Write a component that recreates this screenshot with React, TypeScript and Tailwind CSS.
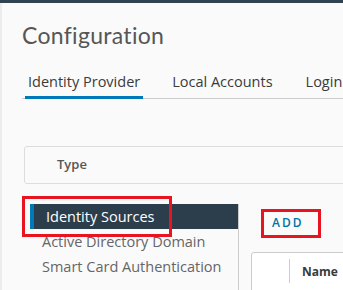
export default function App() {
  const font = { fontFamily: "'Open Sans', Lato, sans-serif" };
  return (
    <div className="h-[290px] w-[343px] overflow-hidden bg-[#fafafa]" style={font}>
      <div className="h-[3px] bg-[#314351]" />
      <div className="flex h-[287px]">
        <div className="w-[2px] shrink-0 bg-[#ececec]" />
        <div className="relative min-w-0 flex-1 pl-[20px]">
          <h1
            className="mt-[18px] text-[23px] leading-[28px] tracking-[0.3px] text-[#565656]"
            style={{ fontFamily: "Lato, sans-serif" }}
          >
            Configuration
          </h1>

          <div className="mt-[24px] flex h-[26px] w-[400px] items-start border-b border-[#cccccc] pl-[3px] text-[14.5px] leading-[18px] text-[#3a3a3a]">
            <div className="-mb-px h-[26px] border-b-[3px] border-[#0079b8] px-[3px]">
              Identity Provider
            </div>
            <div className="ml-[29px]">Local Accounts</div>
            <div className="ml-[33px]">Login</div>
          </div>

          <div className="ml-[2px] mt-[47px] flex h-[38px] w-[400px] items-center rounded-[3px] border border-[#dddddd] pl-[32px] text-[13px] font-semibold text-[#565656]">
            Type
          </div>

          <div className="mt-[20px] flex">
            <div className="ml-[8px] w-[209px] shrink-0 border-r border-[#cccccc] pb-[20px] text-[14.5px] text-[#666666]">
              <div className="flex h-[25px] items-center border-l-[4px] border-[#0079b8] bg-[#2c3e4c] pl-[12px] text-white">
                Identity Sources
              </div>
              <div className="flex h-[25px] items-center pl-[12px]">Active Directory Domain</div>
              <div className="flex h-[25px] items-center pl-[12px]">Smart Card Authentication</div>
            </div>
            <div className="min-w-0 flex-1 pl-[12px]">
              <div className="ml-[21px] mt-[11px] text-[12px] font-semibold leading-[16px] tracking-[2px] text-[#0072a3]">ADD</div>
              <div className="mt-[21px] flex h-[60px] w-[200px] rounded-tl-[3px] border border-[#cccccc] bg-white">
                <div className="mt-[6px] h-[24px] w-[38px] border-r border-[#cccccc]" />
                <div className="ml-[12px] mt-[10px] text-[12px] font-bold text-[#3a3a3a]">Name</div>
              </div>
            </div>
          </div>

          <div className="absolute left-[20px] top-[193px] h-[41px] w-[150px] border-[3px] border-[#e8141f]" />
          <div className="absolute left-[259px] top-[206px] h-[29px] w-[60px] border-[3px] border-[#e8141f]" />
        </div>
      </div>
    </div>
  );
}
